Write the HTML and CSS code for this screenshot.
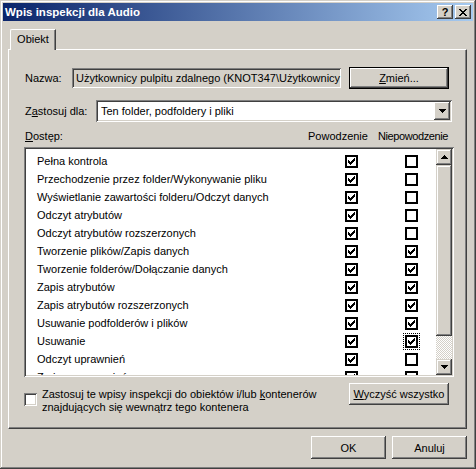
FILE: index.html
```html
<!DOCTYPE html>
<html lang="pl">
<head>
<meta charset="utf-8">
<title>Wpis inspekcji dla Audio</title>
<link rel="stylesheet" href="styles.css">
</head>
<body>
<svg class="defs" width="0" height="0" aria-hidden="true">
  <defs>
    <symbol id="chk" viewBox="0 0 13 13">
      <path d="M3 5h1v3H3zM4 6h1v3H4zM5 7h1v3H5zM6 6h1v3H6zM7 5h1v3H7zM8 4h1v3H8zM9 3h1v3H9z"/>
    </symbol>
    <symbol id="up" viewBox="0 0 7 4">
      <path d="M3 0h1v1H3zM2 1h3v1H2zM1 2h5v1H1zM0 3h7v1H0z"/>
    </symbol>
    <symbol id="down" viewBox="0 0 7 4">
      <path d="M0 0h7v1H0zM1 1h5v1H1zM2 2h3v1H2zM3 3h1v1H3z"/>
    </symbol>
  </defs>
</svg>
<div class="window">
  <div class="titlebar">
    <span class="title">Wpis inspekcji dla Audio</span>
    <div class="tbtns">
      <span class="tbtn help">?</span>
      <span class="tbtn close"><svg width="8" height="7" viewBox="0 0 8 7"><path d="M0 0h2v1H0zM6 0h2v1H6zM1 1h2v1H1zM5 1h2v1H5zM2 2h4v1H2zM3 3h2v1H3zM2 4h4v1H2zM1 5h2v1H1zM5 5h2v1H5zM0 6h2v1H0zM6 6h2v1H6z"/></svg></span>
    </div>
  </div>
  <div class="content">
    <div class="tabs"><div class="tab">Obiekt</div></div>
    <div class="panel">
      <div class="row name-row">
        <span class="lbl lbl-name">Nazwa:</span>
        <div class="field ro">Użytkownicy pulpitu zdalnego (KNOT347\Użytkownicy</div>
        <div class="btn default change"><span><u>Z</u>mień...</span></div>
      </div>
      <div class="row apply-row">
        <span class="lbl lbl-apply">Z<u>a</u>stosuj dla:</span>
        <div class="combo">
          <span class="combo-text">Ten folder, podfoldery i pliki</span>
          <span class="combo-btn"><svg width="7" height="4"><use href="#down"/></svg></span>
        </div>
      </div>
      <div class="head-row">
        <span><u>D</u>ostęp:</span>
        <span>Powodzenie</span>
        <span class="narrow">Niepowodzenie</span>
      </div>
      <div class="listbox">
        <div class="rows">
          <div class="lrow"><span>Pełna kontrola</span><span class="lcb on"><svg><use href="#chk"/></svg></span><span></span><span class="lcb"></span></div>
          <div class="lrow"><span>Przechodzenie przez folder/Wykonywanie pliku</span><span class="lcb on"><svg><use href="#chk"/></svg></span><span></span><span class="lcb"></span></div>
          <div class="lrow"><span>Wyświetlanie zawartości folderu/Odczyt danych</span><span class="lcb on"><svg><use href="#chk"/></svg></span><span></span><span class="lcb"></span></div>
          <div class="lrow"><span>Odczyt atrybutów</span><span class="lcb on"><svg><use href="#chk"/></svg></span><span></span><span class="lcb"></span></div>
          <div class="lrow"><span>Odczyt atrybutów rozszerzonych</span><span class="lcb on"><svg><use href="#chk"/></svg></span><span></span><span class="lcb"></span></div>
          <div class="lrow"><span>Tworzenie plików/Zapis danych</span><span class="lcb on"><svg><use href="#chk"/></svg></span><span></span><span class="lcb on"><svg><use href="#chk"/></svg></span></div>
          <div class="lrow"><span>Tworzenie folderów/Dołączanie danych</span><span class="lcb on"><svg><use href="#chk"/></svg></span><span></span><span class="lcb on"><svg><use href="#chk"/></svg></span></div>
          <div class="lrow"><span>Zapis atrybutów</span><span class="lcb on"><svg><use href="#chk"/></svg></span><span></span><span class="lcb on"><svg><use href="#chk"/></svg></span></div>
          <div class="lrow"><span>Zapis atrybutów rozszerzonych</span><span class="lcb on"><svg><use href="#chk"/></svg></span><span></span><span class="lcb on"><svg><use href="#chk"/></svg></span></div>
          <div class="lrow"><span>Usuwanie podfolderów i plików</span><span class="lcb on"><svg><use href="#chk"/></svg></span><span></span><span class="lcb on"><svg><use href="#chk"/></svg></span></div>
          <div class="lrow"><span>Usuwanie</span><span class="lcb on"><svg><use href="#chk"/></svg></span><span></span><span class="lcb on focus"><svg><use href="#chk"/></svg></span></div>
          <div class="lrow"><span>Odczyt uprawnień</span><span class="lcb on"><svg><use href="#chk"/></svg></span><span></span><span class="lcb"></span></div>
          <div class="lrow"><span>Zmiana uprawnień</span><span class="lcb on"><svg><use href="#chk"/></svg></span><span></span><span class="lcb"></span></div>
        </div>
        <div class="scrollbar">
          <span class="sb-btn"><svg width="7" height="4"><use href="#up"/></svg></span>
          <span class="sb-thumb"></span>
          <span class="sb-track"></span>
          <span class="sb-btn"><svg width="7" height="4"><use href="#down"/></svg></span>
        </div>
      </div>
      <div class="bottom-row">
        <span class="cb3d"></span>
        <span class="apply-text">Zastosuj te wpisy inspekcji do obiektów i/lub <u>k</u>ontenerów<br>znajdujących się wewnątrz tego kontenera</span>
        <div class="btn clear"><span><u>W</u>yczyść wszystko</span></div>
      </div>
    </div>
    <div class="actions">
      <div class="btn action"><span>OK</span></div>
      <div class="btn action"><span>Anuluj</span></div>
    </div>
  </div>
</div>
</body>
</html>
```
FILE: styles.css
```css
* { box-sizing: border-box; }
html, body { margin: 0; padding: 0; }
body {
  width: 476px;
  height: 469px;
  overflow: hidden;
  background: #d4d0c8;
  font-family: "Liberation Sans", Arial, sans-serif;
  font-size: 11px;
  color: #000;
}
u { text-decoration: underline; text-underline-offset: 1px; }
.defs { position: absolute; width: 0; height: 0; overflow: hidden; }

.window {
  width: 476px;
  height: 469px;
  padding: 3px;
  background: #d4d0c8;
  box-shadow: inset -1px -1px #404040, inset 1px 1px #d4d0c8, inset -2px -2px #808080, inset 2px 2px #fff;
  display: flex;
  flex-direction: column;
}

.titlebar {
  height: 18px;
  flex: 0 0 18px;
  background: linear-gradient(to right, #0a246a, #a6caf0);
  display: flex;
  align-items: center;
  justify-content: space-between;
  padding: 0 2px 0 2px;
}
.title { color: #fff; font-weight: bold; font-size: 11.5px; }
.tbtns { display: flex; }
.tbtn {
  width: 16px;
  height: 14px;
  background: #d4d0c8;
  box-shadow: inset -1px -1px #404040, inset 1px 1px #fff, inset -2px -2px #808080;
  display: flex;
  align-items: center;
  justify-content: center;
}
.tbtn.help { font-weight: bold; font-size: 11px; line-height: 14px; padding-bottom: 1px; }
.tbtn.close { margin-left: 2px; }
.tbtn svg { display: block; }

.content {
  padding: 0 6px 0 5px;
  display: flex;
  flex-direction: column;
}

.tabs { display: flex; padding-left: 2px; margin-top: 8px; height: 20px; }
.tab {
  position: relative;
  z-index: 1;
  width: 46px;
  height: 21px;
  background: #d4d0c8;
  border-left: 1px solid #fff;
  border-top: 1px solid #fff;
  border-right: 1px solid #404040;
  border-top-left-radius: 2px;
  box-shadow: inset -1px 0 #808080;
  display: flex;
  align-items: center;
  justify-content: center;
  padding-bottom: 2px;
}

.panel {
  height: 380px;
  border: 1px solid;
  border-color: #fff #404040 #404040 #fff;
  box-shadow: inset -1px -1px #808080;
  padding-left: 16px;
  display: flex;
  flex-direction: column;
}

.row { display: flex; align-items: center; height: 22px; }
.name-row { margin-top: 17px; }
.apply-row { margin-top: 11px; }
.lbl-name { width: 47px; }
.lbl-apply { width: 71px; }

.field {
  width: 269px;
  height: 20px;
  padding: 0 4px;
  display: flex;
  align-items: center;
  white-space: nowrap;
  overflow: hidden;
  box-shadow: inset 1px 1px #808080, inset -1px -1px #fff, inset 2px 2px #404040, inset -2px -2px #d4d0c8;
}
.field.ro { background: #d4d0c8; }

.btn {
  height: 22px;
  background: #d4d0c8;
  box-shadow: inset -1px -1px #404040, inset 1px 1px #fff, inset -2px -2px #808080;
  display: flex;
  align-items: center;
  justify-content: center;
}
.btn.default { border: 1px solid #000; }
.change { width: 100px; margin-left: 8px; }
.clear { width: 100px; }

.combo {
  width: 356px;
  height: 22px;
  background: #fff;
  box-shadow: inset 1px 1px #808080, inset -1px -1px #fff, inset 2px 2px #404040, inset -2px -2px #d4d0c8;
  display: flex;
  align-items: center;
  padding: 2px;
}
.combo-text { flex: 1; padding-left: 3px; }
.combo-btn {
  width: 16px;
  height: 18px;
  background: #d4d0c8;
  box-shadow: inset -1px -1px #404040, inset 1px 1px #fff, inset -2px -2px #808080;
  display: flex;
  align-items: center;
  justify-content: center;
}
.combo-btn svg, .sb-btn svg { display: block; }

.head-row {
  margin-top: 7px;
  height: 14px;
  display: grid;
  grid-template-columns: 283px 70px auto;
  align-items: center;
}
.narrow { letter-spacing: -0.4px; }

.listbox {
  margin-top: 4px;
  margin-left: -1px;
  width: 430px;
  height: 230px;
  padding: 2px;
  background: #fff;
  box-shadow: inset 1px 1px #808080, inset -1px -1px #fff, inset 2px 2px #404040, inset -2px -2px #d4d0c8;
  display: flex;
}
.rows { flex: 1; overflow: hidden; padding-top: 3px; }
.lrow {
  height: 18px;
  display: grid;
  grid-template-columns: 308px 13px 47px 13px;
  align-items: center;
  padding-left: 11px;
  white-space: nowrap;
}
.lcb {
  width: 13px;
  height: 13px;
  border: 2px solid #000;
  background: #fff;
  position: relative;
}
.lcb svg { position: absolute; left: -2px; top: -2px; width: 13px; height: 13px; fill: #000; }
.lcb.focus { outline: 1px dotted #000; outline-offset: 1px; }

.scrollbar { width: 16px; display: flex; flex-direction: column; }
.sb-btn {
  height: 16px;
  flex: 0 0 16px;
  background: #d4d0c8;
  box-shadow: inset -1px -1px #404040, inset 1px 1px #d4d0c8, inset -2px -2px #808080, inset 2px 2px #fff;
  display: flex;
  align-items: center;
  justify-content: center;
}
.sb-thumb {
  height: 171px;
  flex: 0 0 171px;
  background: #d4d0c8;
  box-shadow: inset -1px -1px #404040, inset 1px 1px #d4d0c8, inset -2px -2px #808080, inset 2px 2px #fff;
}
.sb-track {
  flex: 1;
  background: repeating-conic-gradient(#fff 0 25%, #d4d0c8 0 50%) 0 0 / 2px 2px;
}

.bottom-row { margin-top: 6px; display: flex; align-items: flex-start; }
.cb3d {
  width: 13px;
  height: 13px;
  flex: 0 0 13px;
  margin-left: -1px;
  margin-top: 10px;
  background: #fff;
  box-shadow: inset 1px 1px #808080, inset -1px -1px #fff, inset 2px 2px #404040, inset -2px -2px #d4d0c8;
}
.apply-text { flex: 0 0 307px; margin-left: 5px; margin-top: 5px; line-height: 13px; }

.actions { margin-top: 7px; display: flex; justify-content: flex-end; gap: 6px; }
.action { width: 75px; height: 23px; }
```
